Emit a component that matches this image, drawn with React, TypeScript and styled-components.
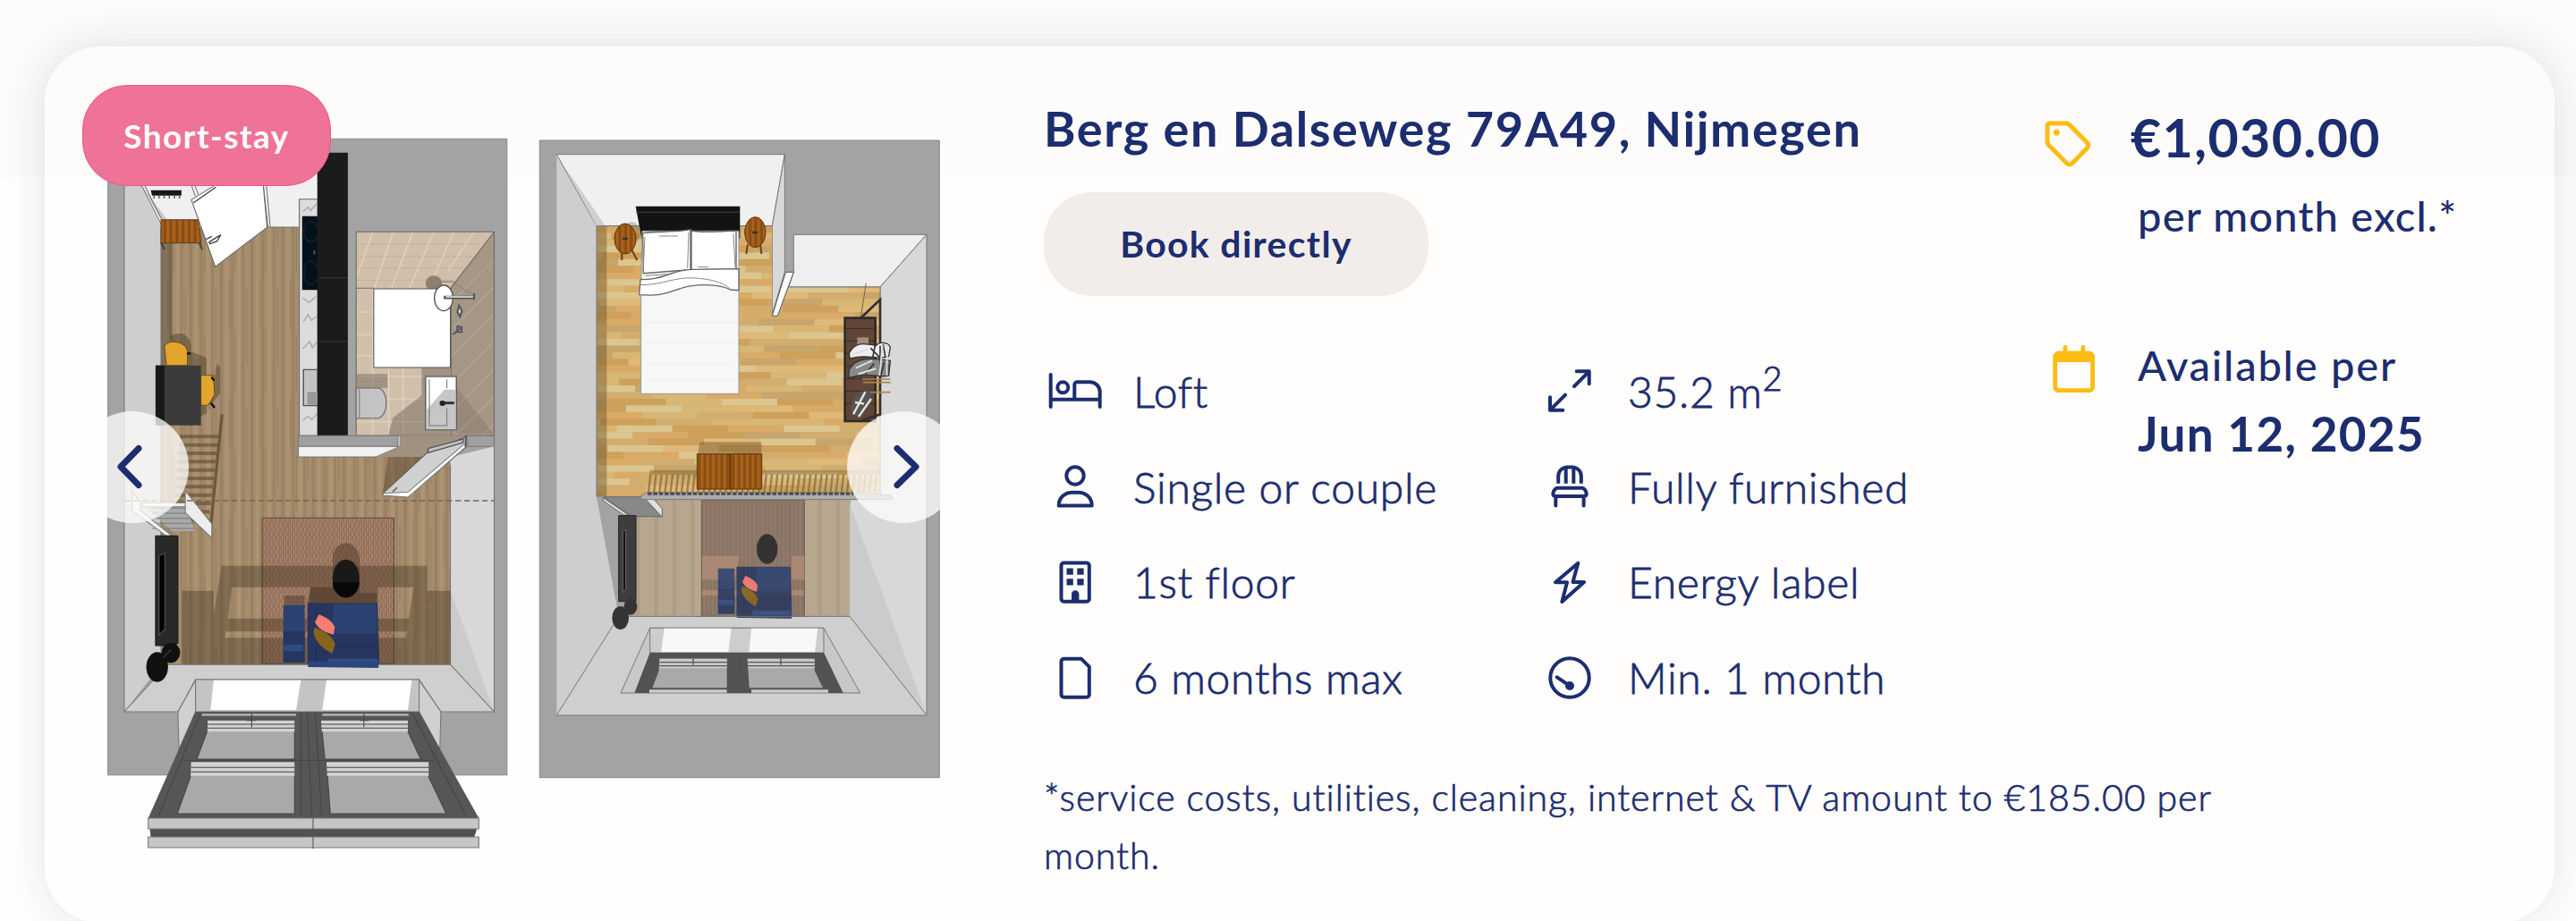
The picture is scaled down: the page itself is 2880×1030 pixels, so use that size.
import React from 'react';
import styled, { createGlobalStyle } from 'styled-components';

const NAVY = '#1c2d70';
const YELLOW = '#fdbc14';

const GlobalStyle = createGlobalStyle`
  * {
    box-sizing: border-box;
  }

  body {
    margin: 0;
    overflow: hidden;
    font-family: Lato, 'Open Sans', sans-serif;
    color: ${NAVY};
  }
`;

// Layout
const Page = styled.div`
  height: 1030px;
  padding: 52px 24px 0 50px;
  overflow: hidden;
  background: linear-gradient(#fcfbf9 0 198px, #fffefd 198px);
`;

const Card = styled.article`
  position: relative;
  display: flex;
  gap: 116px;
  height: 980px;
  padding: 57px 0 0 70px;
  border-radius: 62px;
  background: linear-gradient(#fdfcfa 0 146px, #fffefd 146px);
  box-shadow: 0 0 44px rgba(28, 38, 120, 0.13);
`;

const Badge = styled.span`
  position: absolute;
  top: 43px;
  left: 42px;
  width: 278px;
  height: 113px;
  border: 1px solid #ee5686;
  border-radius: 50px;
  background: #ef7297;
  color: #fff;
  font-size: 37px;
  font-weight: 700;
  line-height: 112px;
  text-align: center;
  letter-spacing: 1.4px;
`;

const Gallery = styled.div`
  position: relative;
  flex: none;
  width: 931px;
  padding-top: 41px;

  > svg {
    display: block;
  }
`;

interface SideProps {
  side: 'left' | 'right';
}

const ArrowButton = styled.button<SideProps>`
  position: absolute;
  top: 351px;
  ${({ side }) => side}: ${({ side }) => (side === 'left' ? '-35px' : '-22px')};
  width: 126px;
  height: 125px;
  padding: 0;
  border: 0;
  border-radius: 50%;
  background: rgba(255, 254, 253, 0.76);

  svg {
    display: block;
  }
`;

const Content = styled.div`
  display: grid;
  grid-template-columns: 1119px 1fr;
  grid-template-rows: 702px auto;
  row-gap: 48px;
  flex: 1;
`;

const Info = styled.section`
  display: flex;
  flex-direction: column;
  align-items: flex-start;
`;

const Title = styled.h2`
  margin: 0;
  font-size: 54px;
  font-weight: 700;
  line-height: 70px;
  letter-spacing: 1.6px;
  white-space: nowrap;
`;

const BookButton = styled.button`
  width: 430px;
  height: 116px;
  margin: 36px 0 53px;
  border: 0;
  border-radius: 54px;
  background: #f2edea;
  color: inherit;
  font: 700 41px/112px Lato, sans-serif;
  letter-spacing: 1.3px;
`;

const Features = styled.ul`
  display: grid;
  grid-template-columns: 553px 1fr;
  grid-auto-rows: 106.8px;
  margin: 0;
  padding: 0;
  list-style: none;
`;

const Feature = styled.li`
  display: flex;
  align-items: center;
  gap: 33px;
  padding-left: 3px;
  font-size: 48px;
  font-weight: 300;
  letter-spacing: 0.7px;
  white-space: nowrap;
  -webkit-text-stroke: 0.8px ${NAVY};

  sup {
    position: relative;
    top: -19px;
    font-size: 38px;
    line-height: 0;
    vertical-align: baseline;
  }
`;

const Footnote = styled.p`
  grid-column: 1 / -1;
  width: 1340px;
  margin: 0;
  font-size: 41px;
  font-weight: 300;
  line-height: 65px;
  letter-spacing: 0.95px;
  -webkit-text-stroke: 0.7px ${NAVY};
`;

const Aside = styled.aside`
  display: flex;
  flex-direction: column;
  gap: 101px;
  padding-top: 5px;
`;

const Fact = styled.div`
  display: grid;
  grid-template-columns: 104px 1fr;
  white-space: nowrap;
`;

const PriceIcon = styled.span`
  margin-top: 21px;
`;

const DateIcon = styled.span`
  margin: 12px 0 0 9px;
`;

const Price = styled.strong`
  margin-left: -8px;
  font-size: 59px;
  font-weight: 700;
  line-height: 80px;
  letter-spacing: 1.4px;
`;

const FactText = styled.span`
  grid-column: 2;
  font-size: 47px;
  font-weight: 500;
  line-height: 64px;
`;

const PriceUnit = styled(FactText)`
  padding-top: 15px;
  letter-spacing: 1.2px;
`;

const DateLabel = styled(FactText)`
  padding-top: 2px;
  letter-spacing: 1.8px;
`;

const DateText = styled.strong`
  grid-column: 2;
  padding-top: 7px;
  font-size: 53px;
  font-weight: 700;
  line-height: 70px;
  letter-spacing: 1.4px;
`;

// Icons
const IconFrame = styled.svg`
  flex: none;
  fill: none;
  stroke: ${NAVY};
  stroke-width: 4;
  stroke-linecap: round;
  stroke-linejoin: round;

  .solid {
    fill: ${NAVY};
    stroke: none;
  }
`;

const Icon = ({ children }: { children: React.ReactNode }) => (
  <IconFrame width="64" height="48" viewBox="0 0 64 48">
    {children}
  </IconFrame>
);

const BedIcon = () => (
  <Icon>
    <path d="M4.7 6v36M4.7 33.7h55M31.3 33.7V17.3a3 3 0 0 1 3-3h14.4a11 11 0 0 1 11 11V42" />
    <circle cx="18.3" cy="20.3" r="6" />
  </Icon>
);

const PersonIcon = () => (
  <Icon>
    <circle cx="32" cy="12" r="9.7" />
    <path d="M13.7 45.6C13.7 36 21 30.7 29 30.7h6.4c8 0 15.3 5.3 15.3 14.9Z" />
  </Icon>
);

const BuildingIcon = () => (
  <Icon>
    <rect x="16.5" y="2.5" width="31.3" height="43.2" rx="3" />
    <path
      className="solid"
      d="M22.5 8.5h7.3v7.3h-7.3zM34.3 8.5h7.3v7.3h-7.3zM22.5 20.3h7.3v7.3h-7.3zM34.3 20.3h7.3v7.3h-7.3zM28 45v-7.5a4.2 4.2 0 0 1 8.4 0V45z"
    />
  </Icon>
);

const PageIcon = () => (
  <Icon>
    <path d="M19.5 2.7h19.2l9.1 9v31a3 3 0 0 1-3 3H19.5a3 3 0 0 1-3-3v-37a3 3 0 0 1 3-3Z" />
  </Icon>
);

const ExpandIcon = () => (
  <Icon>
    <path d="M37 19 53.7 2.3M39.7 2.3h14v14M27 28.7 10 45.7M10 31.3v14.4h14.3" />
  </Icon>
);

const ChairIcon = () => (
  <Icon>
    <path
      strokeLinecap="butt"
      d="M19.2 20.7V12.5a10 10 0 0 1 10-10h5.6a10 10 0 0 1 10 10v8.2M27.7 3v17.7M36.3 3v17.7"
    />
    <path d="M18 25.7h28c2 0 4.7 4 4.7 6.3 0 2-1 3-3 3H16.3c-2 0-3-1-3-3 0-2.3 2.7-6.3 4.7-6.3ZM16.3 36v9.5M47.6 36v9.5" />
  </Icon>
);

const BoltIcon = () => (
  <Icon>
    <path d="M41.3 2.7 16 24.3h13L23.3 46 48 24H35.5Z" />
  </Icon>
);

const GaugeIcon = () => (
  <Icon>
    <circle cx="32" cy="24" r="21.7" />
    <path d="m17.7 23.3 14.3 9.7" />
    <circle className="solid" cx="32" cy="33" r="5" />
  </Icon>
);

const TagIcon = () => (
  <svg width="52" height="52" viewBox="0 0 52 52" fill="none" stroke={YELLOW} strokeWidth="5" strokeLinejoin="round">
    <path d="M5.5 3H24a5 5 0 0 1 3.6 1.5l19.9 20a4.5 4.5 0 0 1 0 6L31 47.6a4.5 4.5 0 0 1-6.4 0L4.5 27.3A5 5 0 0 1 3 23.7V5.5A2.5 2.5 0 0 1 5.5 3Z" />
    <circle cx="13.3" cy="13.3" r="3.5" fill={YELLOW} stroke="none" />
  </svg>
);

const CalendarIcon = () => (
  <svg width="48" height="54" viewBox="0 0 48 54" fill="none" stroke={YELLOW} strokeWidth="4.8" strokeLinecap="round">
    <path d="M13.9 2.5v6M33.9 2.5v6" />
    <rect x="2.6" y="9" width="42" height="41.6" rx="4" />
    <path d="M3 9h41v10H3z" fill={YELLOW} stroke="none" />
  </svg>
);

const Chevron = ({ side }: SideProps) => (
  <svg width="126" height="125" viewBox="0 0 126 125" fill="none" stroke={NAVY} strokeWidth="7" strokeLinecap="round" strokeLinejoin="round">
    <path d={side === 'left' ? 'M70 41.5 50 62l20 20.5' : 'M56 41.5 77 62 56 82.5'} />
  </svg>
);

// Floor plans
const PLANK_COLORS = ['#d9ab66', '#dcc68f', '#cfa059', '#d8b674', '#c7a56b', '#dfb978', '#d3ad6e'];

const planks = Array.from({ length: 41 }, (_, row) => {
  const offset = (row * 137) % 190;
  return Array.from({ length: 7 }, (_, col) => ({
    x: 231 - offset + col * 187,
    y: 368 + row * 22.3,
    fill: PLANK_COLORS[(row * 5 + col * 3 + ((row * col) % 4)) % PLANK_COLORS.length],
  }));
}).flat();

const range = (count: number, start: number, step: number) =>
  Array.from({ length: count }, (_, i) => start + i * step);

const Patterns = () => (
  <defs>
    <pattern id="oak" width="96" height="400" patternUnits="userSpaceOnUse">
      <rect width="96" height="400" fill="#a58d6d" />
      <path d="M0 0h10v400H0zM34 0h9v400h-9zM70 0h7v400h-7z" fill="#998163" />
      <path d="M18 0h8v400h-8zM54 0h11v400H54z" fill="#ad9572" />
      <path d="M30 20v160M48 200v190M84 50v250" stroke="#8c7658" strokeWidth="2" />
    </pattern>
    <pattern id="rug" width="14" height="30" patternUnits="userSpaceOnUse">
      <rect width="14" height="30" fill="#9b755f" />
      <path d="M2 0v17M9 10v20" stroke="#b28c74" strokeWidth="3" />
      <path d="M6 8v22M13 0v14" stroke="#80604f" strokeWidth="2" />
    </pattern>
    <pattern id="walnut" width="38" height="200" patternUnits="userSpaceOnUse">
      <rect width="38" height="200" fill="#9c5917" />
      <path d="M5 0v200M25 0v200" stroke="#83480f" strokeWidth="5" />
      <path d="M14 0v200M33 0v200" stroke="#b06a20" strokeWidth="4" />
    </pattern>
    <clipPath id="loftFloor">
      <path d="M231 368h589v300h18l37-95h307v704H231z" />
    </clipPath>
    <clipPath id="showerWall">
      <path d="M1435 658v684h-135V845z" />
    </clipPath>
  </defs>
);

const Sofa = () => (
  <g>
    <path d="M775 1910h67v193h-67zM852 1905h216l5 160v57l-221-4z" fill="#2b4272" />
    <path d="M775 1998h67v105h-67zM852 1905h82l-10 100h146l3 115-221-2z" fill="#263660" />
    <path d="M777 2043h60v22h-60zM915 2090h155v19H915z" fill="#2e4b85" />
    <path d="M852 1905h216l5 160v57l-221-4zM878 1912v195M878 2050h190" fill="none" stroke="#25304e" strokeWidth="3" />
    <path d="M886 1942c20 8 39 18 50 42l-4 25c-25-7-47-17-58-42z" fill="#fb7d71" />
    <path d="M873 1985c33 14 58 30 64 57l-9 30c-33-17-54-42-59-72z" fill="#87641c" />
  </g>
);

const GroundFloor = () => (
  <g transform="translate(40 40) scale(.35714 .33333)" strokeWidth="3">
    <path d="M226 346h1249v2134H226z" fill="#a3a3a3" stroke="#8a8a8a" />
    <path d="M277 392h115v1718l-115 158z" fill="#cecece" />
    <path d="M277 392h603v250H392L330 505z" fill="#f0f0f0" />
    <path d="M330 500 410 615H392z" fill="#c8c8c8" />
    <path d="M392 642h490v771h416v697H392z" fill="url(#oak)" />
    <path d="M392 642h35v560h-35z" fill="#000" opacity=".22" />
    <path
      d="M277 392v1876M392 642v1468M330 500l62 132M340 500l52 112M724 642h101M712 500l15 142M722 500l12 142M487 500l12 38M497 500l12 32"
      fill="none"
      stroke="#777"
    />

    {/* entrance */}
    <path d="M360 518h96v18h-92z" fill="#171717" />
    <path d={range(6, 370, 16).map((x) => `M${x} 534v12`).join('')} stroke="#555" strokeWidth="4" />
    <path d="m392 695 12 22M512 695l9 22" stroke="#444" strokeWidth="6" />
    <path d="M392 617h117l8 78H392z" fill="url(#walnut)" stroke="#5b3a18" />
    <path d="m487 550 76-50h149l12 143-162 132z" fill="#fff" stroke="#666" />
    <path d="m494 560 70-52M533 683l18-10M543 692l36-24-12 22-22 8z" fill="none" stroke="#444" strokeWidth="4" />

    {/* kitchen */}
    <path d="M825 548h57v794h-57z" fill="#dcdcdc" stroke="#666" />
    <path
      d="m836 590 16-15 8 12 20-25M836 880l20 15 20-20M838 960l14-25 10 20 16-12M836 1050l22-25 8 22 14-20M836 1290l16-14 12 12 16-20"
      fill="none"
      stroke="#aaa"
      strokeWidth="4"
    />
    <path d="M834 605h48v248h-48z" fill="#04111d" />
    <ellipse cx="862" cy="658" rx="23" ry="34" fill="none" stroke="#1c2831" />
    <ellipse cx="862" cy="795" rx="23" ry="38" fill="none" stroke="#1c2831" />
    <path d="M868 720h8v14h-8z" fill="#39424b" />
    <path d="M838 1120h44v121h-44z" fill="#c4c4c4" stroke="#555" strokeWidth="4" />
    <path d="M850 1195h32v43h-32z" fill="#999" />
    <path d="M882 392h95v950h-95z" fill="#1b1b1b" />
    <path d="M888 812h89M888 1025h89" stroke="#333" strokeWidth="4" />

    {/* bathroom */}
    <path d="M1003 658h432v684h-432z" fill="#d0bfaa" />
    <path d="M1003 700h390M1003 740h365M1003 780h335M1003 820h310" stroke="#c4b19b" />
    <path
      d="M1055 660l-50 145M1118 660l-58 187M1180 660l-67 187M1245 660l-75 187M1308 660l-78 187M1370 660l-80 130M1055 850v490M1003 927h55M1003 1003h55M1003 1073h55M1003 1143h217M1003 1218h217M1003 1295h217M1105 1113v229M1150 1113v229"
      stroke="#e4d8c8"
    />
    <path d="M1435 658v684h-135V845z" fill="#a59686" />
    <g clipPath="url(#showerWall)">
      <path d={range(9, 750, 92).map((y) => `M1435 ${y}l-135 145`).join('')} stroke="#b8aa99" />
    </g>
    <path d="M1208 1100h90v242h-195l15-60 90-75zM1003 1135h98v47h-98z" fill="#6f6458" opacity=".48" />
    <path d="M1318 1180l115 155h-115z" fill="#6f6458" opacity=".25" />
    <ellipse cx="1246" cy="830" rx="26" ry="25" fill="#8f8071" />
    <path d="M1270 825h35l55 40" fill="none" stroke="#998b7c" strokeWidth="5" />
    <path d="M1003 658h432v684h-432zM1435 658l-135 187v497M1003 847h55" fill="none" stroke="#6e675f" />
    <path d="M1058 849h240v264h-240z" fill="#fff" stroke="#555" />
    <ellipse cx="1277" cy="880" rx="29" ry="43" fill="#fff" stroke="#555" strokeWidth="4" />
    <path d="M1277 878h97" stroke="#555" strokeWidth="11" />
    <path d="M1283 876h88" stroke="#ddd" strokeWidth="5" />
    <path d="M1372 864v22M1325 905l-5 22 8 15 6-20zM1306 1002l24-20M1320 975l13 3v16h-13z" stroke="#55565c" strokeWidth="6" fill="#ddd" />
    <path d="M1003 1182h68c35 5 35 95 0 101h-68z" fill="#c4c4c4" stroke="#666" />
    <path d="M1013 1185v96" stroke="#777" />
    <path d="M1220 1143h97v179h-97z" fill="#c6c6c6" stroke="#555" />
    <path d="M1224 1147h89v40h-34l-55 68z" fill="#fff" />
    <path d="M1232 1153v155h55v-58M1287 1153v30" fill="none" stroke="#777" />
    <path d="M1275 1232h35" stroke="#333" strokeWidth="9" />
    <circle cx="1273" cy="1233" r="9" fill="#222" />

    {/* inner walls and doors */}
    <path d="M822 1342h313v36H822zM1350 1342h85v36h-85z" fill="#a0a0a0" stroke="#777" />
    <path d="M822 1378h317l-74 35H822z" fill="#f1f1f1" stroke="#777" />
    <path d="M1134 1342h6v36h-6z" fill="#fff" stroke="#777" />
    <path d="M1140 1342h205l-117 50-20 21h-143l75-35z" fill="#a09281" />
    <path d="M1103 1413h105l-122 120z" fill="#5f4a30" opacity=".5" />
    <path d="M1298 1413l137-35v890l-137-158z" fill="#d8d8d8" />
    <path d="M1298 1860l137 408-137-158z" fill="#cbcbcb" />
    <path d="M1087 1535l142-140 118-50v35l-182 165z" fill="#d0d0d0" stroke="#555" />
    <path d="M1087 1535l78-4 175-160 10 5-185 172-78-6z" fill="#fff" stroke="#777" />
    <path d="M1117 1530l14-14M1345 1342v38M1228 1385l110-32v12l-110 34z" fill="#c2c2c2" stroke="#555" strokeWidth="4" />
    <path d="M1298 1440v670M1435 1378v890" stroke="#777" />

    {/* desk with chairs */}
    <path d="M420 1010c30-25 75-5 65 50l50 20v190h-40l50-20 22-150 10 10v90l-60 80z" fill="#453421" opacity=".42" />
    <path d="M403 1045c0-27 68-25 72 15v46h-66zM517 1139h39l4 65-20 36h-23z" fill="#e3a52d" stroke="#665029" />
    <path d="M473 1066h12M550 1145l8 12M548 1232l12 16" stroke="#111" strokeWidth="7" />
    <path d="M375 1106h142v201H375z" fill="#3b3b3b" />
    <path d="M375 1106h28v201h-28z" fill="#191919" />

    {/* stairs */}
    <path
      d={range(11, 1345, 28).map((y, i) => `M${450 - i * 2} ${y}h${122 - i}`).join('')}
      stroke="#634f36"
      strokeWidth="12"
      opacity=".65"
    />
    <path d="M583 1270l-35 370" stroke="#6b573c" strokeWidth="9" />
    <path d="M330 1567h138l30 95h-73z" fill="#a9a9a9" />
    <path d={range(5, 1585, 17).map((y) => `M365 ${y}h135`).join('')} stroke="#777" />
    <path d="M334 1567h134v13H334zM302 1527l25 40v25l100 86h-19l-106-85zM468 1527l83 110v48l-83-85z" fill="#ededed" stroke="#777" />
    <path d="M277 1560h1158" stroke="#76674f" strokeWidth="4" strokeDasharray="18 10" />

    {/* living area */}
    <path d="M709 1618h412v489H709z" fill="url(#rug)" stroke="#5f4b40" />
    <path
      fillRule="evenodd"
      d="M458 1862h99v80l25-164h643v84h73v248H458zM613 1850h247l-5 105H602zM1070 1850h112l-14 105h-98zM595 1999h567l-2 21H592z"
      fill="#3d2e1b"
      opacity=".37"
    />
    <path d="M778 1878h64v32h-64zM930 1770c-10-90 90-90 84 0v100h54v35H850l10-55h70z" fill="#3d2a20" opacity=".42" />
    <ellipse cx="971" cy="1821" rx="42" ry="64" fill="#191919" />
    <path d="M929 1834h84c-4 68-80 68-84 0z" fill="#080808" />
    <Sofa />
    <path d="M375 1678h70v360l-25 8h-45z" fill="#292929" stroke="#151515" />
    <path d="M386 1745l18-9v255l-18 20z" fill="#000" stroke="#555" />
    <ellipse cx="423" cy="2070" rx="29" ry="34" fill="#111" />
    <path d="M277 2268l135-158h886l137 158h-167l-68-108H500l-55 108z" fill="#cfcfcf" stroke="#777" />
    <ellipse cx="380" cy="2118" rx="34" ry="50" fill="#111" />
    <path d="M400 2085l24-26" stroke="#333" strokeWidth="5" />
    <path d="M852 2100h221v21l-221-3z" fill="#2c467c" />

    {/* roof window */}
    <path d="M500 2160h700v108H500z" fill="#c4c4c4" stroke="#777" />
    <path d="M557 2162h273l-15 100H547zM910 2162h267l-12 100H897z" fill="#fff" />
    <path d="M500 2162l-55 106 3 127 52-127zM1200 2162l68 106-3 127-65-127z" fill="#d0d0d0" stroke="#777" />
    <path d="M500 2268h700l187 357H352z" fill="#565656" />
    <path
      d="M538 2297h272v130H504l32-92zM893 2297h272v38l40 92H905zM486 2437h324v173H443l41-123zM910 2437h320v50l55 123H922z"
      fill="#a9a9a7"
      stroke="#444"
    />
    <path d="M538 2297h272v38H537zM893 2297h272v38H895zM486 2437h324v46H485zM910 2437h320v46H912z" fill="#d2d2d2" />
    <path d="M520 2278h295M897 2278h270" stroke="#bbb" strokeWidth="7" />
    <path
      d="M538 2310h272M538 2323h272M893 2310h272M893 2323h272M486 2455h324M486 2470h324M910 2455h320M910 2470h320M660 2297h28M676 2275v45M1015 2297h28M1027 2275v45M465 2431h785M850 2268l18 460M515 2275l-130 340M1180 2275l165 340M830 2268v350M875 2268l20 350"
      fill="none"
      stroke="#444"
    />
    <path d="M357 2660h1024l-8 28H360z" fill="#515151" />
    <path d="M352 2625h1035v36H352zM352 2688h1035v36H352z" fill="#c6c6c6" stroke="#777" />
    <path d="M868 2625v99" stroke="#555" />
  </g>
);

const UpperFloor = () => (
  <g transform="translate(590 130) scale(.33333)" strokeWidth="3">
    <path d="M40 81h1341v2138H40z" fill="#a3a3a3" stroke="#8a8a8a" />
    <path d="M97 128l134 240v909l74 401L97 2010z" fill="#cecece" />
    <path d="M97 128h765l-42 240H231z" fill="#f0f0f0" stroke="#777" />
    <path d="M125 170l136 198h-30z" fill="#cfcfcf" />
    <path d="M862 128v395l-42 142V368z" fill="#d8d8d8" stroke="#777" />
    <path d="M892 397h446l-156 176H875l17-50z" fill="#efefef" stroke="#777" />
    <path d="M1338 397v1613l-258-332V1285h102V573z" fill="#d8d8d8" stroke="#777" />
    <path d="M1080 1300l258 710-258-332z" fill="#cbcbcb" />
    <path d="M97 2010l208-332h775l258 332z" fill="#cfcfcf" stroke="#777" />

    <g clipPath="url(#loftFloor)">
      {planks.map((plank, i) => (
        <rect key={i} x={plank.x} y={plank.y} width="188" height="23" fill={plank.fill} />
      ))}
      <path d="M231 368h34v909h-34z" fill="#5b4420" opacity=".38" />
    </g>
    <path d="M231 368v909M231 368h589M875 573h307v704" fill="none" stroke="#777" />
    <path d="M865 523h27l-54 147h-18z" fill="#fff" stroke="#555" />

    {/* bed */}
    <path d="M362 302h350v108H382z" fill="#131313" />
    <path d="M364 322h346" stroke="#444" />
    <path d="M316 455v28M350 450l17 33M738 430l-5 32M780 430l4 32" stroke="#6c3d16" strokeWidth="6" />
    <ellipse cx="350" cy="392" rx="26" ry="38" fill="#444" opacity=".25" />
    <ellipse cx="327" cy="411" rx="36" ry="51" fill="url(#walnut)" stroke="#5b3510" />
    <ellipse cx="763" cy="389" rx="35" ry="51" fill="url(#walnut)" stroke="#5b3510" />
    <path d="M318 411h17M754 390h17" stroke="#333" strokeWidth="8" />
    <path d="M384 385h324v546H380V600z" fill="#f7f7f7" stroke="#999" />
    <path d="M386 392c50-8 105 0 160-12v135l-158 12zM549 384c50 10 95 0 150 0v128l-150 4z" fill="#fff" stroke="#666" strokeWidth="4" />
    <path
      d="M378 548c90 0 100-34 180-34l150-2v72l-28-2c-40-20-120-22-170-3-55 18-70 25-136 20z"
      fill="#fff"
      stroke="#666"
      strokeWidth="4"
    />
    <path
      d="M378 566c80 0 110-28 185-23 50 4 90 12 115 36M393 405l-6 120M540 390l-4 120M690 395l6 112M440 402h64M600 387h55M395 535l70-5M570 506h36"
      fill="none"
      stroke="#888"
    />
    <path d="M388 690h310M392 760h300M395 830h290M400 885h290" stroke="#f2f2f2" strokeWidth="8" />

    {/* wardrobe */}
    <path d="M1135 560l-18 115" stroke="#766344" />
    <path d="M1064 677h102v346h-102z" fill="#604638" stroke="#2b2b2d" strokeWidth="8" />
    <path d={range(7, 712, 42).map((y) => `M1068 ${y}h95`).join('')} stroke="#3b2a25" />
    <path d="M1117 677l65-62v385l-60 20" fill="none" stroke="#303033" strokeWidth="8" />
    <path d="M1105 742h38v38h-38z" fill="#a58c78" />
    <path d="M1078 795c20-38 50-34 90-25 10-14 40-14 48 5l-5 30c-40 15-70-10-130 8z" fill="#eee" stroke="#333" strokeWidth="4" />
    <path d="M1078 850c25-45 80-38 138-30l-5 50c-40 10-60-15-135 8z" fill="#888" stroke="#333" strokeWidth="4" />
    <path
      d="M1150 778l30 30M1165 770l-8 40M1192 765l8 45M1182 770v105M1162 830l-30 35M1196 825l-12 45M1208 830v38"
      stroke="#333"
      strokeWidth="5"
    />
    <path d="M1100 845l55-25M1108 865l60-18M1190 770l-10 100M1205 765v105M1090 800l50-18" stroke="#ddd" strokeWidth="6" />
    <path d="M1122 882h95M1125 893h92M1130 926h86" stroke="#ad8350" strokeWidth="5" />
    <path d="M1085 990c-5-50 35-75 65-70l2 40-45 50z" fill="#555" />
    <path d="M1092 1000l40-75M1110 1008l42-60M1098 960l30 5" stroke="#e4e4e4" strokeWidth="7" />

    {/* dresser and railing */}
    <path d="M578 1093h206v40H570z" fill="#6f5527" opacity=".45" />
    <path d="M410 1187h772v15H408z" fill="#6f5527" opacity=".4" />
    <path
      d={range(42, 412, 18.5).map((x) => `M${x} 1202l-7 60`).join('')}
      stroke="#866b3f"
      strokeWidth="7"
      opacity=".75"
    />
    <path d="M568 1133h217v118H568z" fill="url(#walnut)" stroke="#5b3510" />
    <path d="M679 1133v118" stroke="#60300b" strokeWidth="5" />
    <path d="M340 1277h740v401H340z" fill="#b7a78f" />
    <path d={range(12, 370, 61).map((x) => `M${x} 1287v388`).join('')} stroke="#aa9982" strokeWidth="12" opacity=".65" />
    <path d="M583 1287h345v391H583z" fill="#8b7466" stroke="#6e5b50" />
    <path d={range(24, 592, 14).map((x) => `M${x} 1290v385`).join('')} stroke="#958071" strokeWidth="3" />
    <path d="M585 1475h125l-15 80H585zM885 1475h43v80h-43zM585 1590h340v18H585z" fill="#b18f78" opacity=".75" />
    <path d="M255 1277h140l50 58v8h-95z" fill="#888" stroke="#666" />
    <path d="M253 1280l85 58h-16l-69-48zM393 1282h28l30 35v28z" fill="#e1e1e1" stroke="#666" />
    <path d="M400 1262h700l122 10v14H380v-12z" fill="#adadad" stroke="#777" />
    <path d="M402 1267h690" stroke="#4b4b4b" strokeWidth="9" strokeDasharray="14 5" />

    {/* lower level seen through the void */}
    <ellipse cx="803" cy="1452" rx="35" ry="50" fill="#333" />
    <g transform="translate(-1 8) scale(.825 .79)" opacity=".85">
      <Sofa />
    </g>
    <path d="M305 1340h58v288h-58z" fill="#3d3d3d" stroke="#222" />
    <path d="M319 1392l10-5v200l-10 12z" fill="#171717" stroke="#666" />
    <ellipse cx="345" cy="1645" rx="22" ry="28" fill="#343434" />
    <ellipse cx="311" cy="1683" rx="28" ry="39" fill="#343434" />
    <path d="M340 1678h740" stroke="#777" />

    {/* roof window */}
    <path d="M410 1717h583l122 218H312z" fill="#c8c8c8" stroke="#777" />
    <path d="M410 1717h583v84H410z" fill="#cdcdcd" stroke="#777" />
    <path d="M458 1718h225l-10 80H448zM750 1718h223l-10 80H742z" fill="#f8f8f8" />
    <path d="M410 1799h583l65 136H358z" fill="#525252" />
    <path d="M442 1820h226v98H418l22-58zM737 1820h225v40l28 58H743z" fill="#a9a9a7" />
    <path d="M442 1820h226v32H441zM737 1820h225v32H739z" fill="#c9c9c9" />
    <path
      d="M442 1832h226M442 1844h226M737 1832h225M737 1844h225M555 1803v38M849 1803v38M700 1800v135M720 1800l10 135"
      stroke="#555"
      strokeWidth="4"
    />
    <path d="M408 1924h260v10H408zM750 1924h258v10H750z" fill="#ccc" />
  </g>
);

const FloorPlans = () => (
  <svg width="931" height="800" viewBox="120 150 931 800">
    <Patterns />
    <GroundFloor />
    <UpperFloor />
  </svg>
);

const features = [
  { icon: <BedIcon />, label: 'Loft' },
  { icon: <ExpandIcon />, label: <>35.2 m<sup>2</sup></> },
  { icon: <PersonIcon />, label: 'Single or couple' },
  { icon: <ChairIcon />, label: 'Fully furnished' },
  { icon: <BuildingIcon />, label: '1st floor' },
  { icon: <BoltIcon />, label: 'Energy label' },
  { icon: <PageIcon />, label: '6 months max' },
  { icon: <GaugeIcon />, label: 'Min. 1 month' },
];

export default function App() {
  return (
    <Page>
      <GlobalStyle />
      <Card>
        <Gallery>
          <FloorPlans />
          <ArrowButton side="left" aria-label="Previous">
            <Chevron side="left" />
          </ArrowButton>
          <ArrowButton side="right" aria-label="Next">
            <Chevron side="right" />
          </ArrowButton>
        </Gallery>
        <Badge>Short-stay</Badge>

        <Content>
          <Info>
            <Title>Berg en Dalseweg 79A49, Nijmegen</Title>
            <BookButton>Book directly</BookButton>
            <Features>
              {features.map((feature, i) => (
                <Feature key={i}>
                  {feature.icon}
                  <span>{feature.label}</span>
                </Feature>
              ))}
            </Features>
          </Info>

          <Aside>
            <Fact>
              <PriceIcon>
                <TagIcon />
              </PriceIcon>
              <Price>€1,030.00</Price>
              <PriceUnit>per month excl.*</PriceUnit>
            </Fact>
            <Fact>
              <DateIcon>
                <CalendarIcon />
              </DateIcon>
              <DateLabel>Available per</DateLabel>
              <DateText>Jun 12, 2025</DateText>
            </Fact>
          </Aside>

          <Footnote>
            *service costs, utilities, cleaning, internet &amp; TV amount to €185.00 per month.
          </Footnote>
        </Content>
      </Card>
    </Page>
  );
}
